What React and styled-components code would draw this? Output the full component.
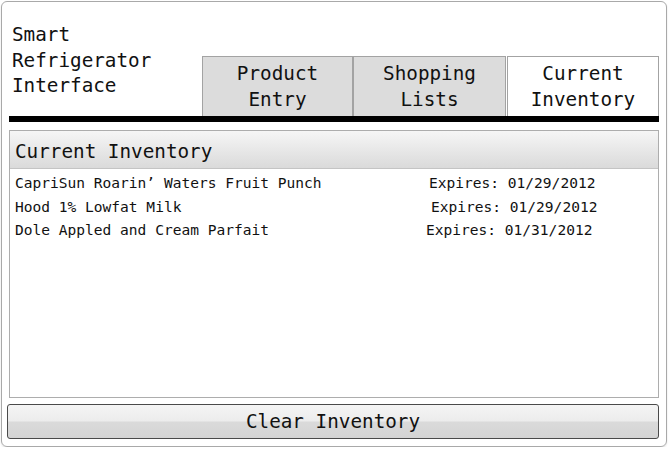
import styled, { createGlobalStyle } from 'styled-components';

const GlobalStyle = createGlobalStyle`
  body {
    margin: 0;
    background: #ffffff;
    font-family: "DejaVu Sans Mono", "Liberation Mono", monospace;
    color: #111111;
  }
`;

const items = [
  { name: 'CapriSun Roarin’ Waters Fruit Punch', expires: '01/29/2012', shift: 3 },
  { name: 'Hood 1% Lowfat Milk', expires: '01/29/2012', shift: 5 },
  { name: 'Dole Appled and Cream Parfait', expires: '01/31/2012', shift: 0 },
];

const tabs = [
  { label: ['Product', 'Entry'], width: 151 },
  { label: ['Shopping', 'Lists'], width: 153 },
  { label: ['Current', 'Inventory'], width: 152, active: true },
];

const App = () => {
  return (
    <>
      <GlobalStyle />
      <Frame>
        <TopBar>
          <Title>
            Smart
            <br />
            Refrigerator
            <br />
            Interface
          </Title>
          <TabRow>
            {tabs.map((tab) => (
              <Tab key={tab.label[0]} $width={tab.width} $active={tab.active}>
                {tab.label[0]}
                <br />
                {tab.label[1]}
              </Tab>
            ))}
          </TabRow>
        </TopBar>
        <Bar />
        <Panel>
          <PanelHeader>Current Inventory</PanelHeader>
          <List>
            {items.map((item) => (
              <Row key={item.name}>
                <span>{item.name}</span>
                <Expiry $shift={item.shift}>Expires: {item.expires}</Expiry>
              </Row>
            ))}
          </List>
        </Panel>
        <ClearButton>Clear Inventory</ClearButton>
      </Frame>
    </>
  );
};

const Frame = styled.div`
  box-sizing: border-box;
  margin: 1px 0 0 1px;
  width: 666px;
  height: 446px;
  border: 1px solid #a9a9a9;
  border-radius: 6px;
  box-shadow: 0 1px 2px rgba(0, 0, 0, 0.12);
  padding: 0 7px 0 6px;
  display: flex;
  flex-direction: column;
`;

const TopBar = styled.div`
  height: 114px;
  display: flex;
  justify-content: space-between;
  align-items: flex-end;
`;

const Title = styled.div`
  align-self: flex-start;
  padding: 20px 0 0 4px;
  font-size: 19.3px;
  line-height: 25.5px;
`;

const TabRow = styled.div`
  display: flex;
  align-items: flex-end;
`;

const Tab = styled.div`
  box-sizing: border-box;
  width: ${(p) => p.$width}px;
  height: 60px;
  margin-left: ${(p) => (p.$active ? 1 : 0)}px;
  border: 1px solid #a3a3a3;
  border-bottom: none;
  background: ${(p) => (p.$active ? '#ffffff' : '#dcdcdc')};
  text-align: center;
  font-size: 19.3px;
  line-height: 25.5px;
  padding-top: 4px;
`;

const Bar = styled.div`
  height: 6px;
  margin-left: 1px;
  background: #000000;
`;

const Panel = styled.div`
  box-sizing: border-box;
  margin: 8px 0 0 1px;
  height: 268px;
  border: 1px solid #adadad;
  display: flex;
  flex-direction: column;
`;

const PanelHeader = styled.div`
  height: 38px;
  box-sizing: border-box;
  border-bottom: 1px solid #c4c4c4;
  background: linear-gradient(#f6f6f6, #dadada);
  font-size: 19.3px;
  line-height: 33px;
  padding: 4px 0 0 5px;
`;

const List = styled.div`
  padding: 2px 0 0 5px;
  display: flex;
  flex-direction: column;
`;

const Row = styled.div`
  display: grid;
  grid-template-columns: 411px auto;
  font-size: 14.55px;
  line-height: 23.5px;
  white-space: pre;
`;

const Expiry = styled.span`
  padding-left: ${(p) => p.$shift}px;
`;

const ClearButton = styled.button`
  box-sizing: border-box;
  margin: 6px 0 0 -1px;
  width: 652px;
  height: 35px;
  border: 1px solid #4a4a4a;
  border-radius: 3px;
  background: linear-gradient(#f4f4f4 0%, #ececec 48%, #dadada 52%, #d4d4d4 100%);
  font-family: "DejaVu Sans Mono", "Liberation Mono", monospace;
  font-size: 19.3px;
  color: #111111;
  padding: 0;
`;

export default App;
